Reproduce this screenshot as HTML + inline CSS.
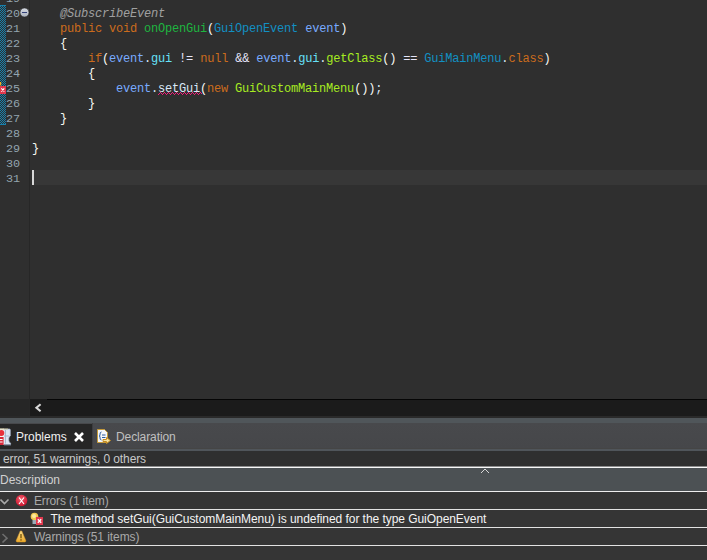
<!DOCTYPE html>
<html><head><meta charset="utf-8">
<style>
*{margin:0;padding:0;box-sizing:border-box}
html,body{width:707px;height:560px;overflow:hidden;background:#2f2f2f}
body{position:relative;font-family:"Liberation Sans",sans-serif}
.abs{position:absolute}
#editor{left:0;top:0;width:707px;height:399px;background:#2f2f2f}
#gutline{left:29px;top:0;width:1px;height:416px;background:#272727}
#checker{left:0;top:5px;width:6px;height:120px;
 background-image:linear-gradient(45deg,#1681ae 25%,transparent 25%,transparent 75%,#1681ae 75%),linear-gradient(45deg,#1681ae 25%,transparent 25%,transparent 75%,#1681ae 75%);
 background-size:2px 2px;background-position:0 0,1px 1px}
#checktop{left:0;top:5px;width:6px;height:1px;background:#1681ae}
#checkbot{left:0;top:124px;width:6px;height:1px;background:#1681ae}
.ln{position:absolute;left:6px;width:14px;font-family:"Liberation Mono",monospace;font-size:11.8px;letter-spacing:0px;line-height:15px;padding-top:1.5px;color:#93a5b0;text-align:left;white-space:pre}
.code{position:absolute;left:32px;font-family:"Liberation Mono",monospace;font-size:12px;letter-spacing:-0.2px;line-height:15px;padding-top:2px;color:#d9e8f7;white-space:pre}
.kw{color:#cc6c1d}
.ann{color:#a0a0a0;font-style:italic}
.md{color:#1eb540}
.cls{color:#1290c3}
.par{color:#79abff}
.fld{color:#66e1f8}
.op{color:#e6e6fa}
.br{color:#f9faf4}
.mi{color:#a7ec21}
#curline{left:34px;top:170px;width:673px;height:15px;background:#373737}
#caret{left:32px;top:170px;width:2px;height:15px;background:#d8d8d8}
#hsleft{left:0;top:399px;width:29px;height:17px;background:#262626}
#hscroll{left:30px;top:399px;width:677px;height:17px;background:#1b1b1b}
#hscrolltop{left:47px;top:399px;width:660px;height:1px;background:#050505}
#hscrollbot{left:0;top:416px;width:707px;height:2px;background:#2a2a2a}
#tabbar{left:0;top:418px;width:707px;height:33px;background:linear-gradient(#50565a 0,#50565a 5px,#48494c 5px,#46474a 30px,#454545 30px,#454545 31px,#50555a 31px)}
#tabact{left:0;top:424px;width:92px;height:25px;background:#262626}
.ui{position:absolute;font-family:"Liberation Sans",sans-serif;font-size:12px;white-space:pre}
#status{left:0;top:451px;width:707px;height:15px;background:#2f2f2f}
.hline{position:absolute;left:0;width:707px;height:1px;background:#e2e2e2}
#header{left:0;top:468px;width:707px;height:23px;background:#4c5154}
.row{position:absolute;left:0;width:707px;height:17px;background:#353535}
svg{position:absolute;overflow:visible}
</style></head><body>
<div id="editor" class="abs"></div>
<div id="curline" class="abs"></div>
<div id="gutline" class="abs"></div>
<div id="checker" class="abs"></div>
<div id="checktop" class="abs"></div>
<div id="checkbot" class="abs"></div>

<div class="ln" style="top:-10px">19</div>
<div class="ln" style="top:5px">20</div>
<div class="ln" style="top:20px">21</div>
<div class="ln" style="top:35px">22</div>
<div class="ln" style="top:50px">23</div>
<div class="ln" style="top:65px">24</div>
<div class="ln" style="top:80px">25</div>
<div class="ln" style="top:95px">26</div>
<div class="ln" style="top:110px">27</div>
<div class="ln" style="top:125px">28</div>
<div class="ln" style="top:140px">29</div>
<div class="ln" style="top:155px">30</div>
<div class="ln" style="top:170px">31</div>

<!-- fold icon -->
<svg style="left:19px;top:7px" width="11" height="11" viewBox="0 0 11 11">
 <defs><linearGradient id="fg" x1="0" y1="0" x2="0" y2="1"><stop offset="0" stop-color="#d6dae2"/><stop offset="1" stop-color="#aab1bd"/></linearGradient></defs>
 <circle cx="5.5" cy="5.5" r="4.5" fill="url(#fg)" stroke="#262626" stroke-width="0.6"/>
 <rect x="3" y="5" width="5" height="1" fill="#34427a"/>
</svg>
<!-- error marker in gutter -->
<svg style="left:0;top:81px" width="8" height="14" viewBox="0 0 8 14">
 <rect x="0" y="1" width="1.2" height="3.5" fill="#f0b020"/>
 <rect x="0" y="5" width="6" height="8" fill="#e0384d"/>
 <path d="M1.3 7.4 L4.3 10.6 M4.3 7.4 L1.3 10.6" stroke="#ffffff" stroke-width="1.1"/>
</svg>

<div class="code" style="top:5px">    <span class="ann">@SubscribeEvent</span></div>
<div class="code" style="top:20px">    <span class="kw">public</span> <span class="kw">void</span> <span class="md">onOpenGui</span><span class="br">(</span><span class="cls">GuiOpenEvent</span> <span class="par">event</span><span class="br">)</span></div>
<div class="code" style="top:35px">    <span class="br">{</span></div>
<div class="code" style="top:50px">        <span class="kw">if</span><span class="br">(</span><span class="par">event</span>.<span class="fld">gui</span> <span class="op">!=</span> <span class="kw">null</span> <span class="op">&amp;&amp;</span> <span class="par">event</span>.<span class="fld">gui</span>.<span class="mi">getClass</span><span class="br">()</span> <span class="op">==</span> <span class="cls">GuiMainMenu</span>.<span class="kw">class</span><span class="br">)</span></div>
<div class="code" style="top:65px">        <span class="br">{</span></div>
<div class="code" style="top:80px">            <span class="par">event</span>.setGui<span class="br">(</span><span class="kw">new</span> <span class="mi">GuiCustomMainMenu</span><span class="br">())</span>;</div>
<div class="code" style="top:95px">        <span class="br">}</span></div>
<div class="code" style="top:110px">    <span class="br">}</span></div>
<div class="code" style="top:140px"><span class="br">}</span></div>
<!-- squiggle -->
<svg style="left:158px;top:92px" width="44" height="3" viewBox="0 0 44 3" shape-rendering="crispEdges" fill="#f0207a"><rect x="0" y="2" width="1" height="1"/><rect x="1" y="1" width="1" height="1"/><rect x="2" y="0" width="1" height="1"/><rect x="3" y="1" width="1" height="1"/><rect x="4" y="2" width="1" height="1"/><rect x="5" y="1" width="1" height="1"/><rect x="6" y="0" width="1" height="1"/><rect x="7" y="1" width="1" height="1"/><rect x="8" y="2" width="1" height="1"/><rect x="9" y="1" width="1" height="1"/><rect x="10" y="0" width="1" height="1"/><rect x="11" y="1" width="1" height="1"/><rect x="12" y="2" width="1" height="1"/><rect x="13" y="1" width="1" height="1"/><rect x="14" y="0" width="1" height="1"/><rect x="15" y="1" width="1" height="1"/><rect x="16" y="2" width="1" height="1"/><rect x="17" y="1" width="1" height="1"/><rect x="18" y="0" width="1" height="1"/><rect x="19" y="1" width="1" height="1"/><rect x="20" y="2" width="1" height="1"/><rect x="21" y="1" width="1" height="1"/><rect x="22" y="0" width="1" height="1"/><rect x="23" y="1" width="1" height="1"/><rect x="24" y="2" width="1" height="1"/><rect x="25" y="1" width="1" height="1"/><rect x="26" y="0" width="1" height="1"/><rect x="27" y="1" width="1" height="1"/><rect x="28" y="2" width="1" height="1"/><rect x="29" y="1" width="1" height="1"/><rect x="30" y="0" width="1" height="1"/><rect x="31" y="1" width="1" height="1"/><rect x="32" y="2" width="1" height="1"/><rect x="33" y="1" width="1" height="1"/><rect x="34" y="0" width="1" height="1"/><rect x="35" y="1" width="1" height="1"/><rect x="36" y="2" width="1" height="1"/><rect x="37" y="1" width="1" height="1"/><rect x="38" y="0" width="1" height="1"/><rect x="39" y="1" width="1" height="1"/><rect x="40" y="2" width="1" height="1"/><rect x="41" y="1" width="1" height="1"/><rect x="42" y="0" width="1" height="1"/><rect x="43" y="1" width="1" height="1"/></svg>
<div id="caret" class="abs"></div>

<div id="hsleft" class="abs"></div>
<div id="hscroll" class="abs"></div>
<div id="hscrolltop" class="abs"></div>
<svg style="left:34px;top:403px" width="9" height="10" viewBox="0 0 9 10">
 <path d="M6.6 1.3 L2.4 4.8 L6.6 8.3" fill="none" stroke="#d8d8d8" stroke-width="2.1"/>
</svg>
<div id="hscrollbot" class="abs"></div>
<div id="tabbar" class="abs"></div>
<div id="tabact" class="abs"></div>
<div class="abs" style="left:92px;top:423px;width:1px;height:26px;background:#3c3d40"></div>
<!-- problems icon -->
<svg style="left:0;top:428px" width="12" height="18" viewBox="0 0 12 18">
 <path d="M3.5 1 H9.5 Q10.3 1 10.3 2 V8 Q8.8 8.5 8.8 10.5 V12.5 Q8.8 14.5 10.6 15 V16.5 H3.5 Z" fill="#dbe5f3" stroke="#a8b4c8" stroke-width="0.7"/>
 <path d="M5.5 2 V15.5 M4 8 H9" stroke="#a4b2cc" stroke-width="0.9"/>
 <rect x="0" y="0.6" width="4" height="16" fill="#f2f2f2"/>
 <rect x="0" y="0.6" width="8" height="0.8" fill="#d8cc9a"/>
 <circle cx="1.4" cy="5" r="2.9" fill="#e8303c"/>
 <rect x="0" y="9" width="3.6" height="8" fill="#d62a3c"/>
 <path d="M0 11.5 H2.6 M0 14 H2.6" stroke="#ffffff" stroke-width="1"/>
 <path d="M4 17 H11" stroke="#7a8498" stroke-width="0.8"/>
</svg>
<div class="ui" style="left:16px;top:430px;color:#f0f0f0">Problems</div>
<svg style="left:73px;top:431px" width="12" height="12" viewBox="0 0 12 12">
 <path d="M2 2 L10 10 M10 2 L2 10" stroke="#ffffff" stroke-width="2.6"/>
</svg>
<!-- declaration icon -->
<svg style="left:96px;top:428px" width="16" height="17" viewBox="0 0 16 17">
 <path d="M1.5 1.5 H8.5 L11.5 4.5 V14.5 H1.5 Z" fill="#f4f6fa" stroke="#c49a3a" stroke-width="1"/>
 <path d="M5.5 4 Q4 4 4 6 V7 Q4 8 3 8 Q4 8 4 9 V10 Q4 12 5.5 12" fill="none" stroke="#2a5aa0" stroke-width="1"/>
 <path d="M6 7 H9.5 M6 9.5 H9.5" stroke="#2a5aa0" stroke-width="1.2"/>
 <path d="M7 11.5 H10.5 V9.5 L14.5 12.5 L10.5 15.5 V13.5 H7 Z" fill="#f8e4a0" stroke="#c48a20" stroke-width="1"/>
</svg>
<div class="ui" style="left:116px;top:430px;color:#c0c0c0;letter-spacing:-0.1px">Declaration</div>
<div id="status" class="abs"></div>
<div class="ui" style="left:3px;top:452px;color:#c8c8c8;letter-spacing:-0.11px">error, 51 warnings, 0 others</div>
<div class="hline" style="top:466px;background:#8c8c8c"></div>
<div class="hline" style="top:467px;background:#f8f8f8"></div>
<div id="header" class="abs"></div>
<div class="ui" style="left:0px;top:473px;color:#d0d0d0">Description</div>
<svg style="left:480px;top:468px" width="10" height="6" viewBox="0 0 10 6">
 <path d="M1 5 L5 1 L9 5" fill="none" stroke="#d8d8d8" stroke-width="1"/>
</svg>
<div class="hline" style="top:491px;background:#efefef"></div>
<div class="row" style="top:492px"></div>
<svg style="left:0;top:498px" width="10" height="8" viewBox="0 0 10 8">
 <path d="M0.5 1.5 L4.5 5.5 L8.5 1.5" fill="none" stroke="#a8a8a8" stroke-width="1.6"/>
</svg>
<svg style="left:15px;top:494px" width="13" height="13" viewBox="0 0 13 13">
 <defs><radialGradient id="rg" cx="0.45" cy="0.35" r="0.7"><stop offset="0" stop-color="#f05a6a"/><stop offset="1" stop-color="#c8102a"/></radialGradient></defs>
 <circle cx="6.5" cy="6.5" r="5.8" fill="url(#rg)"/>
 <path d="M4 3.5 L9 10 M9 3.5 L4 10" stroke="#ffffff" stroke-width="1.2"/>
</svg>
<div class="ui" style="left:34px;top:494px;color:#a9a9a9;letter-spacing:-0.14px">Errors (1 item)</div>
<div class="hline" style="top:509px"></div>
<div class="row" style="top:510px"></div>
<svg style="left:30px;top:512px" width="14" height="14" viewBox="0 0 14 14">
 <circle cx="4.5" cy="4.5" r="3.8" fill="#f2c850"/>
 <circle cx="4" cy="4" r="2" fill="#fbe9a0"/>
 <rect x="2.5" y="8" width="4" height="4" fill="#9aabb8"/>
 <rect x="6" y="5" width="7" height="8" fill="#e0384d"/>
 <path d="M7.8 7.2 L11.2 10.8 M11.2 7.2 L7.8 10.8" stroke="#ffffff" stroke-width="1.3"/>
</svg>
<div class="ui" style="left:50.5px;top:512px;color:#f4f4f4;letter-spacing:-0.05px">The method setGui(GuiCustomMainMenu) is undefined for the type GuiOpenEvent</div>
<div class="hline" style="top:527px"></div>
<div class="row" style="top:528px"></div>
<svg style="left:1px;top:533px" width="8" height="11" viewBox="0 0 8 11">
 <path d="M1.5 1 L6 5.2 L1.5 9.5" fill="none" stroke="#6e6e6e" stroke-width="1.6"/>
</svg>
<svg style="left:15px;top:530px" width="12" height="13" viewBox="0 0 12 13">
 <defs><linearGradient id="wg" x1="0" y1="0" x2="0" y2="1"><stop offset="0" stop-color="#f8dc8a"/><stop offset="1" stop-color="#eba82a"/></linearGradient></defs>
 <path d="M6 0.8 Q6.6 0.8 7 1.6 L10.8 10.4 Q11 12 9.8 12 H2.2 Q1 12 1.2 10.4 L5 1.6 Q5.4 0.8 6 0.8 Z" fill="url(#wg)" stroke="#d89420" stroke-width="0.5"/>
 <rect x="5.3" y="4" width="1.4" height="4.2" fill="#7a5a10"/>
 <rect x="5.3" y="9.2" width="1.4" height="1.4" fill="#7a5a10"/>
</svg>
<div class="ui" style="left:34px;top:530px;color:#a9a9a9;letter-spacing:-0.08px">Warnings (51 items)</div>
<div class="hline" style="top:545px"></div>
<div class="row" style="top:546px;height:14px"></div>
</body></html>
